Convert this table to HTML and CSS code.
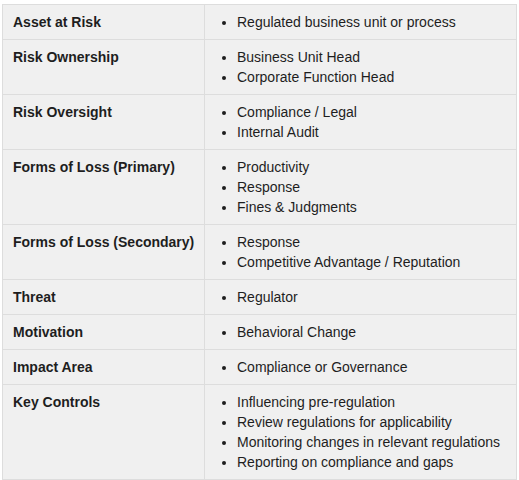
FILE: index.html
```html
<!DOCTYPE html>
<html>
<head>
<meta charset="utf-8">
<link rel="stylesheet" href="styles.css">
</head>
<body>
<table class="risk-table">
  <colgroup><col class="col-label"><col class="col-values"></colgroup>
  <tbody>
    <tr><th>Asset at Risk</th><td><ul><li>Regulated business unit or process</li></ul></td></tr>
    <tr><th>Risk Ownership</th><td><ul><li>Business Unit Head</li><li>Corporate Function Head</li></ul></td></tr>
    <tr><th>Risk Oversight</th><td><ul><li>Compliance / Legal</li><li>Internal Audit</li></ul></td></tr>
    <tr><th>Forms of Loss (Primary)</th><td><ul><li>Productivity</li><li>Response</li><li>Fines &amp; Judgments</li></ul></td></tr>
    <tr><th>Forms of Loss (Secondary)</th><td><ul><li>Response</li><li>Competitive Advantage / Reputation</li></ul></td></tr>
    <tr><th>Threat</th><td><ul><li>Regulator</li></ul></td></tr>
    <tr><th>Motivation</th><td><ul><li>Behavioral Change</li></ul></td></tr>
    <tr><th>Impact Area</th><td><ul><li>Compliance or Governance</li></ul></td></tr>
    <tr><th>Key Controls</th><td><ul><li>Influencing pre-regulation</li><li>Review regulations for applicability</li><li>Monitoring changes in relevant regulations</li><li>Reporting on compliance and gaps</li></ul></td></tr>
  </tbody>
</table>
</body>
</html>
```
FILE: styles.css
```css
html, body {
  margin: 0;
  padding: 0;
  background: #ffffff;
}
body {
  padding: 4px 0 0 2px;
  font-family: "Liberation Sans", Arial, sans-serif;
  font-size: 14px;
  line-height: 20px;
  color: #1e1e1e;
}
.risk-table {
  border-collapse: collapse;
  table-layout: fixed;
  width: 514px;
  background: #f0f0f0;
}
.col-label { width: 202px; }
.col-values { width: 312px; }
.risk-table th,
.risk-table td {
  border: 1px solid #dddddd;
  padding: 7px 10px;
  vertical-align: top;
  text-align: left;
}
.risk-table th {
  font-weight: bold;
  white-space: nowrap;
  padding-right: 2px;
}
.risk-table ul {
  margin: 0;
  padding-left: 22px;
}
```
